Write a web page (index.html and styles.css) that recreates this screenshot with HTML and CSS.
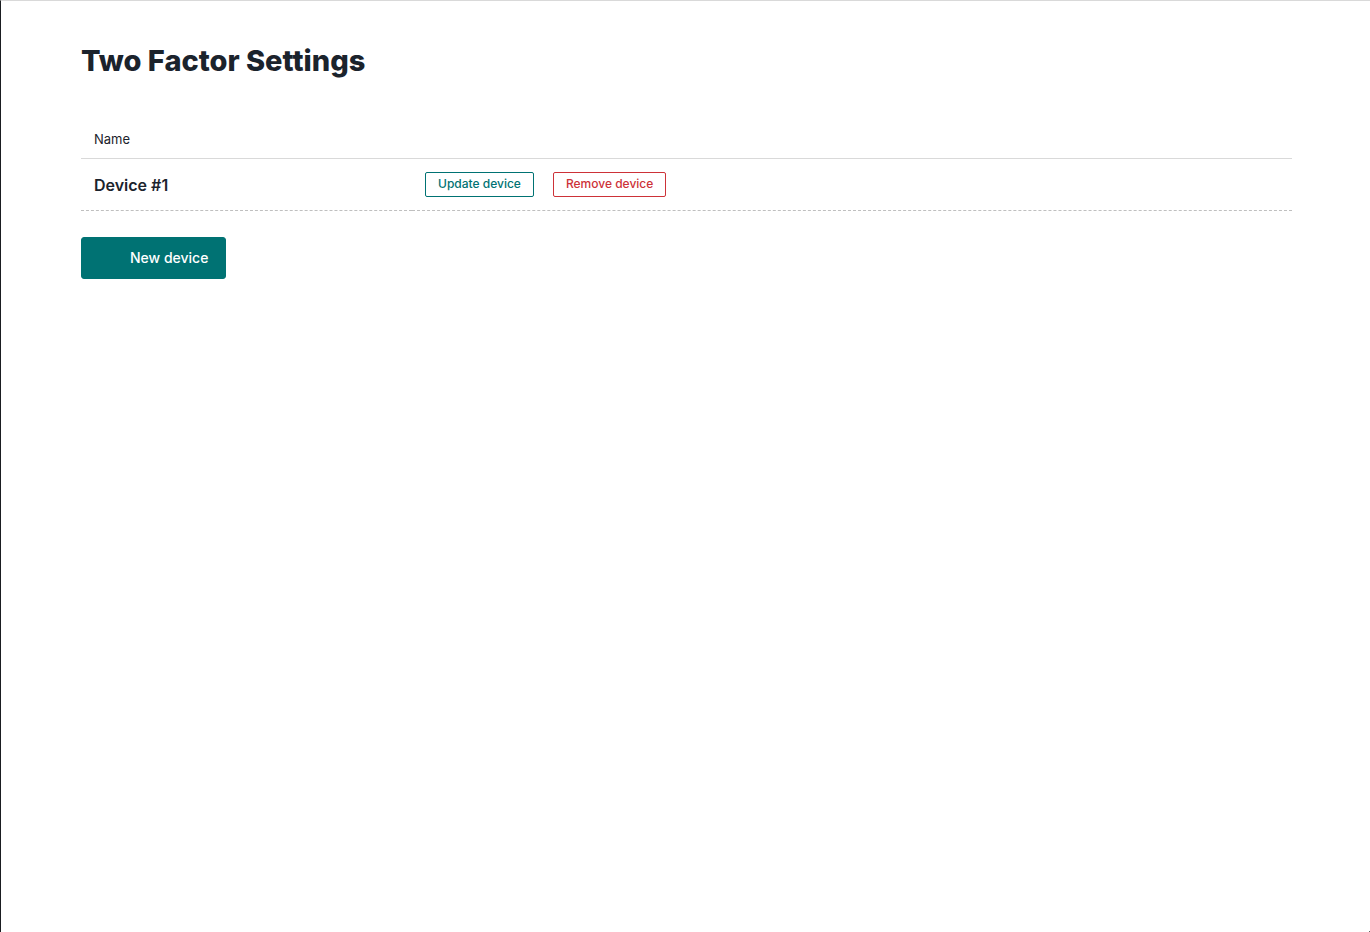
FILE: index.html
```html
<!DOCTYPE html>
<html lang="en">

<head>
    <meta charset="UTF-8">
    <meta name="viewport" content="width=device-width, initial-scale=1.0">
    <title>Two Factor Settings</title>

    <link rel="stylesheet" href="styles.css">
</head>

<body>

    <main class="content">
        <h1>Two Factor Settings</h1>

        <table class="listing">
            <thead>
                <tr>
                    <th class="name">Name</th>
                    <th></th>
                </tr>
            </thead>
            <tbody>
                <tr>
                    <td class="title">Device #1</td>
                    <td>
                        <div class="actions">
                            <button type="button" class="button button-small">Update device</button>
                            <button type="button" class="button button-small no">Remove device</button>
                        </div>
                    </td>
                </tr>
            </tbody>
        </table>

        <a href="#" class="button button-new">New device</a>
    </main>

</body>
</html>
```

FILE: styles.css
```css
:root {
    --text: #1b232c;
    --teal: #007273;
    --red: #cd3238;
    --line: #d9d9d9;
}

* {
    box-sizing: border-box;
}

body {
    margin: 0;
    min-height: 100vh;
    border-top: 1px solid var(--line);
    border-left: 1px solid #1a1d21;
    background-color: #fff;
    color: var(--text);
    font-family: Inter, "Liberation Sans", sans-serif;
    font-size: 13px;
    line-height: 20px;
}

/* corner mark */
body::after {
    content: "";
    position: fixed;
    right: 0;
    bottom: 0;
    width: 1px;
    height: 1px;
    background-color: #666;
}

.content {
    padding: 40px 78px 40px 80px;
}

h1 {
    margin: 0 0 40px;
    font-size: 29px;
    font-weight: 800;
    line-height: 40px;
}

.listing {
    width: 100%;
    margin-bottom: 26px;
    border-collapse: collapse;
}

.listing th {
    padding: 8px 13px 9px;
    border-bottom: 1px solid var(--line);
    font-weight: 400;
    text-align: left;
}

.listing td {
    padding: 13px;
    border-bottom: 1px dashed #bfbfbf;
}

.listing .name {
    width: 331px;
}

.listing .title {
    font-size: 16px;
    font-weight: 600;
}

.actions {
    display: flex;
    gap: 19px;
}

.button {
    border: 1px solid var(--teal);
    border-radius: 3px;
    font-family: inherit;
    font-weight: 500;
    text-decoration: none;
    cursor: pointer;
}

.button-small {
    height: 25px;
    padding: 0 12px 2px;
    border-radius: 2px;
    background-color: #fff;
    color: var(--teal);
    font-size: 12px;
}

.button-small.no {
    border-color: var(--red);
    color: var(--red);
}

.button-new {
    display: inline-block;
    padding: 10px 17px 10px 48px;
    background-color: var(--teal);
    color: #fff;
    font-size: 14px;
}
```
